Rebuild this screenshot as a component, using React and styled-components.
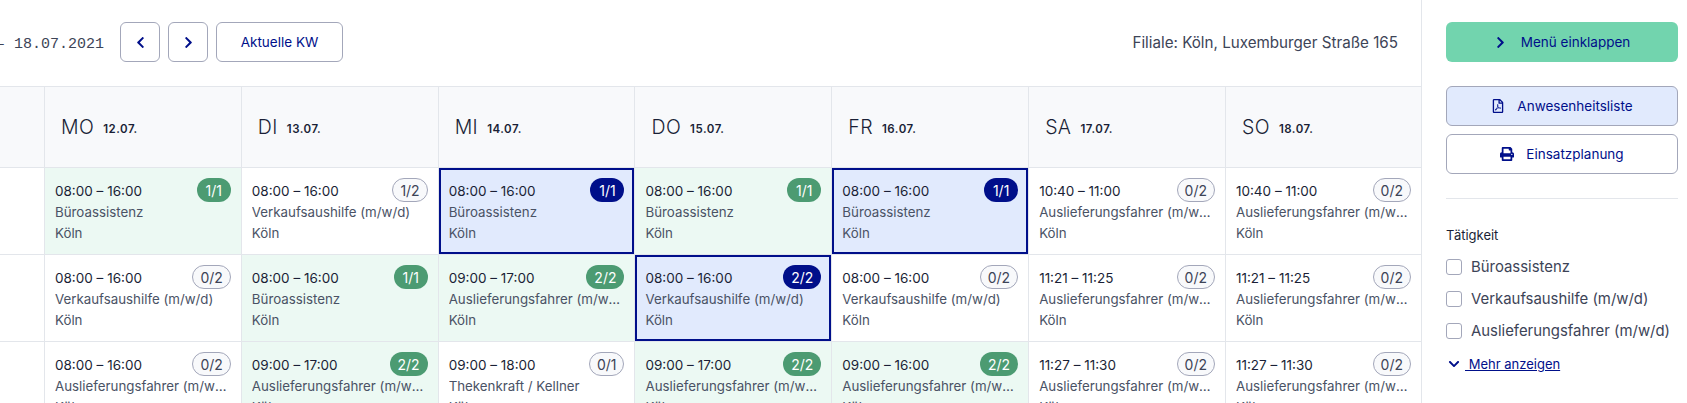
import React from "react";
import styled, { createGlobalStyle } from "styled-components";
import { FaChevronLeft, FaChevronRight, FaChevronDown, FaRegFilePdf, FaPrint } from "react-icons/fa";

const Global = createGlobalStyle`
  html, body { margin: 0; padding: 0; height: 403px; overflow: hidden; background: #fff; }
  body { font-family: Inter, "Liberation Sans", sans-serif; }
  * { box-sizing: border-box; }
`;

const NAVY = "#000f8a";
const LINE = "#e3e6eb";
const BTN_LINE = "#a3a7ba";

const Page = styled.div`
  display: flex;
  width: 1687px;
  height: 403px;
  overflow: hidden;
`;
const Main = styled.main`
  width: 1422px;
  flex: none;
  border-right: 1px solid ${LINE};
  overflow: hidden;
`;
const Toolbar = styled.div`
  display: flex;
  align-items: center;
  height: 87px;
  padding: 0 23px 2px 0;
  border-bottom: 1px solid ${LINE};
`;
const DateRange = styled.span`
  font-family: "Liberation Mono", monospace;
  font-size: 15px;
  color: #3d4457;
  margin-left: -4px;
  margin-right: 16px;
  padding-top: 4px;
  white-space: nowrap;
`;
const OutlineButton = styled.button`
  height: 40px;
  width: ${(p) => p.$w}px;
  margin-right: 8px;
  padding: 0;
  background: #fff;
  border: 1px solid ${BTN_LINE};
  border-radius: 6px;
  color: ${NAVY};
  font: 400 13.5px Inter, sans-serif;
  display: flex;
  align-items: center;
  justify-content: center;
`;
const Branch = styled.span`
  margin-left: auto;
  font-size: 15.2px;
  color: #3d4457;
  white-space: nowrap;
`;
const Grid = styled.div`
  display: grid;
  grid-template-columns: 45px repeat(6, 196.83px) 195px;
  & > :nth-child(8n) { border-right: 0; }
`;
const HeadCell = styled.div`
  height: 81px;
  background: #f8f9fb;
  border-right: 1px solid ${LINE};
  border-bottom: 1px solid ${LINE};
  display: flex;
  align-items: center;
  gap: 9px;
  padding: 0 0 0 16px;
`;
const Day = styled.span`
  font-size: 19.5px;
  font-weight: 300;
  color: #1a1f36;
  letter-spacing: 0.4px;
`;
const DayDate = styled.span`
  font-size: 11.5px;
  font-weight: 600;
  color: #1a1f36;
  letter-spacing: 0.5px;
  padding-top: 4px;
`;
const Spacer = styled.div`
  height: 87px;
  background: #fff;
  border-right: 1px solid ${LINE};
  border-bottom: 1px solid ${LINE};
`;
const backgrounds = { plain: "#fff", full: "#ecf9f3", selected: "#e1eafd" };
const Cell = styled.div`
  height: 87px;
  min-width: 0;
  padding: 10px 13px 0 10px;
  background: ${(p) => backgrounds[p.$kind]};
  border-right: 1px solid ${LINE};
  border-bottom: 1px solid ${LINE};
  box-shadow: ${(p) => (p.$kind === "selected" ? `inset 0 0 0 2px ${NAVY}` : "none")};
`;
const TimeRow = styled.div`
  display: flex;
  align-items: center;
  justify-content: space-between;
  height: 24px;
  margin-right: -3px;
`;
const Time = styled.span`
  font-size: 13.5px;
  color: #1a1f36;
  padding-top: 1px;
`;
const Badge = styled.span`
  height: 24px;
  min-width: 34px;
  padding: 0 ${(p) => (p.$kind === "plain" ? 7 : 8)}px;
  border-radius: 12px;
  display: flex;
  align-items: center;
  justify-content: center;
  font-size: 14px;
  color: ${(p) => (p.$kind === "plain" ? "#3d4457" : "#fff")};
  background: ${(p) => (p.$kind === "plain" ? "#f8f9fb" : p.$kind === "full" ? "#4c9b72" : NAVY)};
  border: ${(p) => (p.$kind === "plain" ? `1px solid ${BTN_LINE}` : "none")};
`;
const Line = styled.div`
  font-size: 13.3px;
  line-height: 21px;
  color: #4a5265;
  white-space: nowrap;
  overflow: hidden;
  text-overflow: ellipsis;
`;
const Side = styled.aside`
  flex: 1;
  padding: 22px 9px 0 24px;
`;
const SideButton = styled.button`
  width: 100%;
  height: 40px;
  display: flex;
  align-items: center;
  justify-content: center;
  gap: ${(p) => p.$gap || 12}px;
  padding: 0;
  border-radius: 6px;
  color: ${NAVY};
  font: 400 13.5px Inter, sans-serif;
  background: ${(p) => p.$bg};
  border: ${(p) => (p.$solid ? "none" : `1px solid ${BTN_LINE}`)};
  margin-bottom: ${(p) => p.$mb}px;
`;
const Divider = styled.hr`
  border: 0;
  border-top: 1px solid ${LINE};
  margin: 24px 0 28px;
`;
const FilterTitle = styled.div`
  font-size: 13px;
  line-height: 16px;
  color: #1a1f36;
  margin-bottom: 8px;
`;
const Check = styled.label`
  display: flex;
  align-items: center;
  gap: 9px;
  height: 32px;
  font-size: 14.9px;
  color: #3d4457;
  white-space: nowrap;
`;
const Box = styled.span`
  width: 16px;
  height: 16px;
  border: 1px solid ${BTN_LINE};
  border-radius: 3px;
  background: #fff;
  flex: none;
`;
const More = styled.a`
  display: flex;
  align-items: center;
  height: 20px;
  margin-top: 7px;
  color: ${NAVY};
  font-size: 13px;
  text-decoration: underline;
  gap: 5px;
  padding-left: 2px;
`;
const MoreText = styled.span`
  white-space: pre;
`;

const B = "Büroassistenz";
const V = "Verkaufsaushilfe (m/w/d)";
const A = "Auslieferungsfahrer (m/w/d)";
const T = "Thekenkraft / Kellner";
const days = [
  ["MO", "12.07."], ["DI", "13.07."], ["MI", "14.07."], ["DO", "15.07."],
  ["FR", "16.07."], ["SA", "17.07."], ["SO", "18.07."],
];
const s = (time, role, count, kind) => ({ time, role, count, kind });
const E = "08:00 – 16:00";
const N = "09:00 – 17:00";
const rows = [
  [s(E, B, "1/1", "full"), s(E, V, "1/2", "plain"), s(E, B, "1/1", "selected"), s(E, B, "1/1", "full"), s(E, B, "1/1", "selected"), s("10:40 – 11:00", A, "0/2", "plain"), s("10:40 – 11:00", A, "0/2", "plain")],
  [s(E, V, "0/2", "plain"), s(E, B, "1/1", "full"), s(N, A, "2/2", "full"), s(E, V, "2/2", "selected"), s(E, V, "0/2", "plain"), s("11:21 – 11:25", A, "0/2", "plain"), s("11:21 – 11:25", A, "0/2", "plain")],
  [s(E, A, "0/2", "plain"), s(N, A, "2/2", "full"), s("09:00 – 18:00", T, "0/1", "plain"), s(N, A, "2/2", "full"), s("09:00 – 16:00", A, "2/2", "full"), s("11:27 – 11:30", A, "0/2", "plain"), s("11:27 – 11:30", A, "0/2", "plain")],
];

export default function App() {
  return (
    <Page>
      <Global />
      <Main>
        <Toolbar>
          <DateRange>– 18.07.2021</DateRange>
          <OutlineButton $w={40}><FaChevronLeft size={13} /></OutlineButton>
          <OutlineButton $w={40}><FaChevronRight size={13} /></OutlineButton>
          <OutlineButton $w={127}>Aktuelle KW</OutlineButton>
          <Branch>Filiale: Köln, Luxemburger Straße 165</Branch>
        </Toolbar>
        <Grid>
          <HeadCell />
          {days.map(([d, date]) => (
            <HeadCell key={d}><Day>{d}</Day><DayDate>{date}</DayDate></HeadCell>
          ))}
          {rows.map((row, i) => (
            <React.Fragment key={i}>
              <Spacer />
              {row.map((c, j) => (
                <Cell key={j} $kind={c.kind}>
                  <TimeRow><Time>{c.time}</Time><Badge $kind={c.kind}>{c.count}</Badge></TimeRow>
                  <Line>{c.role}</Line>
                  <Line>Köln</Line>
                </Cell>
              ))}
            </React.Fragment>
          ))}
        </Grid>
      </Main>
      <Side>
        <SideButton $solid $bg="#72d4ae" $mb={24} $gap={14}><FaChevronRight size={13} />Menü einklappen</SideButton>
        <SideButton $bg="#e1eafd" $mb={8}><FaRegFilePdf size={14} />Anwesenheitsliste</SideButton>
        <SideButton $bg="#fff" $mb={0}><FaPrint size={14} />Einsatzplanung</SideButton>
        <Divider />
        <FilterTitle>Tätigkeit</FilterTitle>
        <Check><Box />Büroassistenz</Check>
        <Check><Box />Verkaufsaushilfe (m/w/d)</Check>
        <Check><Box />Auslieferungsfahrer (m/w/d)</Check>
        <More><FaChevronDown size={12} /><MoreText> Mehr anzeigen</MoreText></More>
      </Side>
    </Page>
  );
}
